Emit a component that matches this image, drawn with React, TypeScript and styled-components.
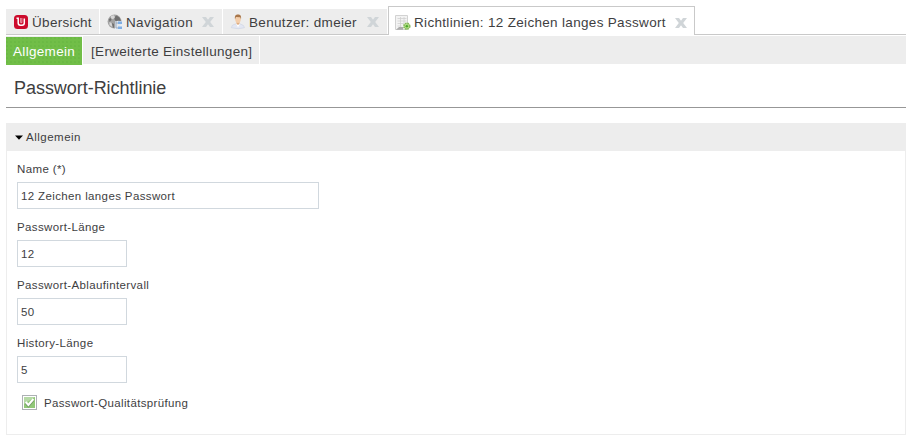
import React from 'react';
import styled, { createGlobalStyle } from 'styled-components';

const GlobalStyle = createGlobalStyle`
  * { box-sizing: border-box; }
  body {
    margin: 0;
    background: #fff;
    color: #3e3e3f;
    font-family: "Liberation Sans", Arial, sans-serif;
    font-size: 11.5px;
    font-kerning: none;
  }
`;

const Page = styled.main`
  width: 920px;
  height: 442px;
  padding: 6px 14px 0 6px;
  overflow: hidden;
`;

const TabBar = styled.nav`
  display: flex;
  align-items: flex-end;
  height: 29px;
  border-bottom: 1px solid #c9c9c9;
`;

const CloseButton = styled.button`
  display: flex;
  margin: 0 8px 0 0;
  padding: 0;
  border: 0;
  background: none;
`;

const TabLabel = styled.span`
  flex: 1;
  margin-left: 3px;
  font-size: 13.5px;
  line-height: 16px;
  letter-spacing: 0.32px;
`;

const Tab = styled.div<{ $width: number; $active?: boolean }>`
  display: flex;
  flex: none;
  align-items: center;
  width: ${p => p.$width}px;
  height: ${p => (p.$active ? 29 : 25)}px;
  margin: 0 ${p => (p.$active ? 0 : 1)}px ${p => (p.$active ? -1 : 0)}px 0;
  padding: ${p => (p.$active ? '3px 0 0 6px' : '1px 0 0 7px')};
  background: ${p => (p.$active ? '#fff' : '#ededed')};
  border: solid #c9c9c9;
  border-width: ${p => (p.$active ? '1px 1px 0' : '0')};
  white-space: nowrap;
  svg { flex: none; }
  ${TabLabel} { padding-top: ${p => (p.$active ? 0 : 1)}px; }
  ${CloseButton} { margin-right: ${p => (p.$active ? 7 : 8)}px; }
`;

const SubBar = styled.nav`
  display: flex;
  height: 28px;
  margin-top: 1px;
  background: #ededed;
`;

const SubTab = styled.div<{ $width: number; $active?: boolean }>`
  flex: none;
  width: ${p => p.$width}px;
  height: 28px;
  margin-top: 1px;
  padding-left: ${p => (p.$active ? 7 : 8)}px;
  color: ${p => (p.$active ? '#fff' : 'inherit')};
  background: ${p =>
    p.$active
      ? 'radial-gradient(circle at 1px 1px, #6bb944 0.7px, #71be48 0.8px) 0 0 / 4px 4px'
      : 'transparent'};
  font-size: 13.5px;
  line-height: 30px;
  letter-spacing: 0.32px;
  white-space: nowrap;
`;

const Divider = styled.i`
  width: 1px;
  background: #fff;
`;

const Title = styled.h1`
  height: 44px;
  margin: 0;
  padding: 11px 8px 0;
  border-bottom: 1px solid #979797;
  font-size: 18px;
  font-weight: 400;
  line-height: 26px;
  letter-spacing: -0.04px;
`;

const Panel = styled.section`
  height: 312px;
  margin-top: 15px;
  border: 1px solid #ededed;
`;

const PanelHeader = styled.header`
  display: flex;
  align-items: center;
  gap: 3px;
  height: 27px;
  padding: 0 0 1px 8px;
  background: #ededed;
  letter-spacing: 0.5px;
`;

const Fields = styled.div`
  display: flex;
  flex-direction: column;
  padding: 8px 10px;
  letter-spacing: 0.37px;
`;

const Field = styled.label`
  display: flex;
  flex-direction: column;
  height: 58px;
  line-height: 20px;
`;

const Input = styled.input<{ $width: number }>`
  width: ${p => p.$width}px;
  height: 27px;
  margin-top: 3px;
  padding: 1px 3px 0;
  border: 1px solid #d1d8de;
  outline: 0;
  background: #fff;
  color: inherit;
  font: inherit;
  letter-spacing: inherit;
`;

const CheckRow = styled.label`
  display: flex;
  align-items: center;
  gap: 7px;
  height: 21px;
  margin: 1px 0 0 5px;
  line-height: 19px;
  letter-spacing: 0.35px;
  span { padding-top: 2px; }
`;

const LogoIcon = () => (
  <svg width="16" height="16" viewBox="0 0 16 16">
    <rect x="1" y="1" width="14" height="14" rx="3.5" fill="#cc0b2c" />
    <path d="M3.5 4.2h1.7V9q0 2.2 2.2 2.2h1.7q2.2 0 2.2-2.2V4.5" fill="none" stroke="#fff" strokeWidth="1.5" />
    <path d="M7.7 4v4.7h1.2V4" fill="none" stroke="#f3c1c9" strokeWidth=".8" />
  </svg>
);

const GlobeIcon = () => (
  <svg width="16" height="16" viewBox="0 0 16 16">
    <circle cx="7.6" cy="7.6" r="7" fill="#a2a2a2" />
    <path d="M7.5 3l2-1.5 3 2 1.5 3.5-3-.5-2 1-1.5-2zM5 9l2 1v4l-1.5-1zM2 5l2-1 .5 2-2 2z" fill="#707070" />
    <path d="M4 1.8l3-.6 1 2-2 2-2-1zM2.5 8l2 1 1 4-3-2z" fill="#d6d6d6" />
    <path d="M8 7h7.5v9H8z" fill="#e8eef5" opacity=".9" />
    <path d="M9 7v7h3M9 9h3" fill="none" stroke="#9aa9bd" />
    <path d="M11 7.5h4v2.5h-4zM11 12.5h4V15h-4z" fill="#7eaee4" />
  </svg>
);

const UserIcon = () => (
  <svg width="16" height="16" viewBox="0 0 16 16">
    <path d="M1.3 13.7q.1-2.9 4-3.7h5q4 1 4.2 3.7-6 2-13.2 0z" fill="#e3e7f3" stroke="#cbd1e1" strokeWidth=".6" />
    <path d="M6 9.5h4l-2 4z" fill="#fff" />
    <path d="M6.5 7.5h3v2.2L8 11 6.5 9.7z" fill="#dfad82" />
    <ellipse cx="8" cy="5.3" rx="2.8" ry="3.6" fill="#f4ceab" />
    <path d="M5 5.2C4.4 1.9 5.8.6 8 .6s3.6 1.3 3 4.6L10.2 3.2 6 3.1z" fill="#a8764a" />
  </svg>
);

const PolicyIcon = () => (
  <svg width="16" height="16" viewBox="0 0 16 16">
    <path d="M.5 .5h12v14H.5z" fill="#f3f3f3" stroke="#d2d2d2" />
    <path d="M2.5 3.5h9M2.5 6h9M2.5 8.5h6M2.5 11h4M5.5 2v10M9 2v7" stroke="#d0d0d0" strokeWidth=".8" />
    <path d="M1 14.8l3-2.8h4v2.8z" fill="#ababab" />
    <circle cx="11.8" cy="11.2" r="2.9" fill="#c0e494" stroke="#85b85a" strokeWidth="1.7" strokeDasharray="1.6 .7" />
    <circle cx="11.8" cy="11.2" r="1.3" fill="#48a928" />
  </svg>
);

const CloseIcon = () => (
  <svg width="12" height="10" viewBox="0 0 12 10">
    <path d="M0 0h4l2 2.7L8 0h4L8.2 5l3.8 5H8L6 7.3 4 10H0l3.8-5z" fill="#d0d5d8" />
  </svg>
);

const ArrowIcon = () => (
  <svg width="8" height="5" viewBox="0 0 8 5">
    <path d="M0 .5h8L4 4.8z" fill="#000" />
  </svg>
);

const CheckIcon = () => (
  <svg width="15" height="15" viewBox="0 0 15 15">
    <rect x=".5" y=".5" width="14" height="14" fill="#fff" stroke="#adb1b4" />
    <rect x="2" y="2" width="11" height="11" fill="#91c878" />
    <path d="M2 2h11L2 9z" fill="#b5d9a5" />
    <path d="M3.7 7.9l2.7 3 5-6" fill="none" stroke="#719765" strokeWidth="2.4" />
    <path d="M3.7 7l2.7 3 5-6" fill="none" stroke="#fff" strokeWidth="2" />
  </svg>
);

const Close = () => (
  <CloseButton aria-label="Schließen"><CloseIcon /></CloseButton>
);

const fields = [
  { label: 'Name (*)', value: '12 Zeichen langes Passwort', width: 302 },
  { label: 'Passwort-Länge', value: '12', width: 110 },
  { label: 'Passwort-Ablaufintervall', value: '50', width: 110 },
  { label: 'History-Länge', value: '5', width: 110 },
];

export default function App() {
  return (
    <>
      <GlobalStyle />
      <Page>
        <TabBar>
          <Tab $width={93}><LogoIcon /><TabLabel>Übersicht</TabLabel></Tab>
          <Tab $width={122}><GlobeIcon /><TabLabel>Navigation</TabLabel><Close /></Tab>
          <Tab $width={164}><UserIcon /><TabLabel>Benutzer: dmeier</TabLabel><Close /></Tab>
          <Tab $width={307} $active>
            <PolicyIcon /><TabLabel>Richtlinien: 12 Zeichen langes Passwort</TabLabel><Close />
          </Tab>
        </TabBar>
        <SubBar>
          <SubTab $width={76} $active>Allgemein</SubTab>
          <Divider />
          <SubTab $width={176}>[Erweiterte Einstellungen]</SubTab>
          <Divider />
        </SubBar>
        <Title>Passwort-Richtlinie</Title>
        <Panel>
          <PanelHeader><ArrowIcon />Allgemein</PanelHeader>
          <Fields>
            {fields.map(field => (
              <Field key={field.label}>
                {field.label}
                <Input $width={field.width} defaultValue={field.value} />
              </Field>
            ))}
            <CheckRow><CheckIcon /><span>Passwort-Qualitätsprüfung</span></CheckRow>
          </Fields>
        </Panel>
      </Page>
    </>
  );
}
